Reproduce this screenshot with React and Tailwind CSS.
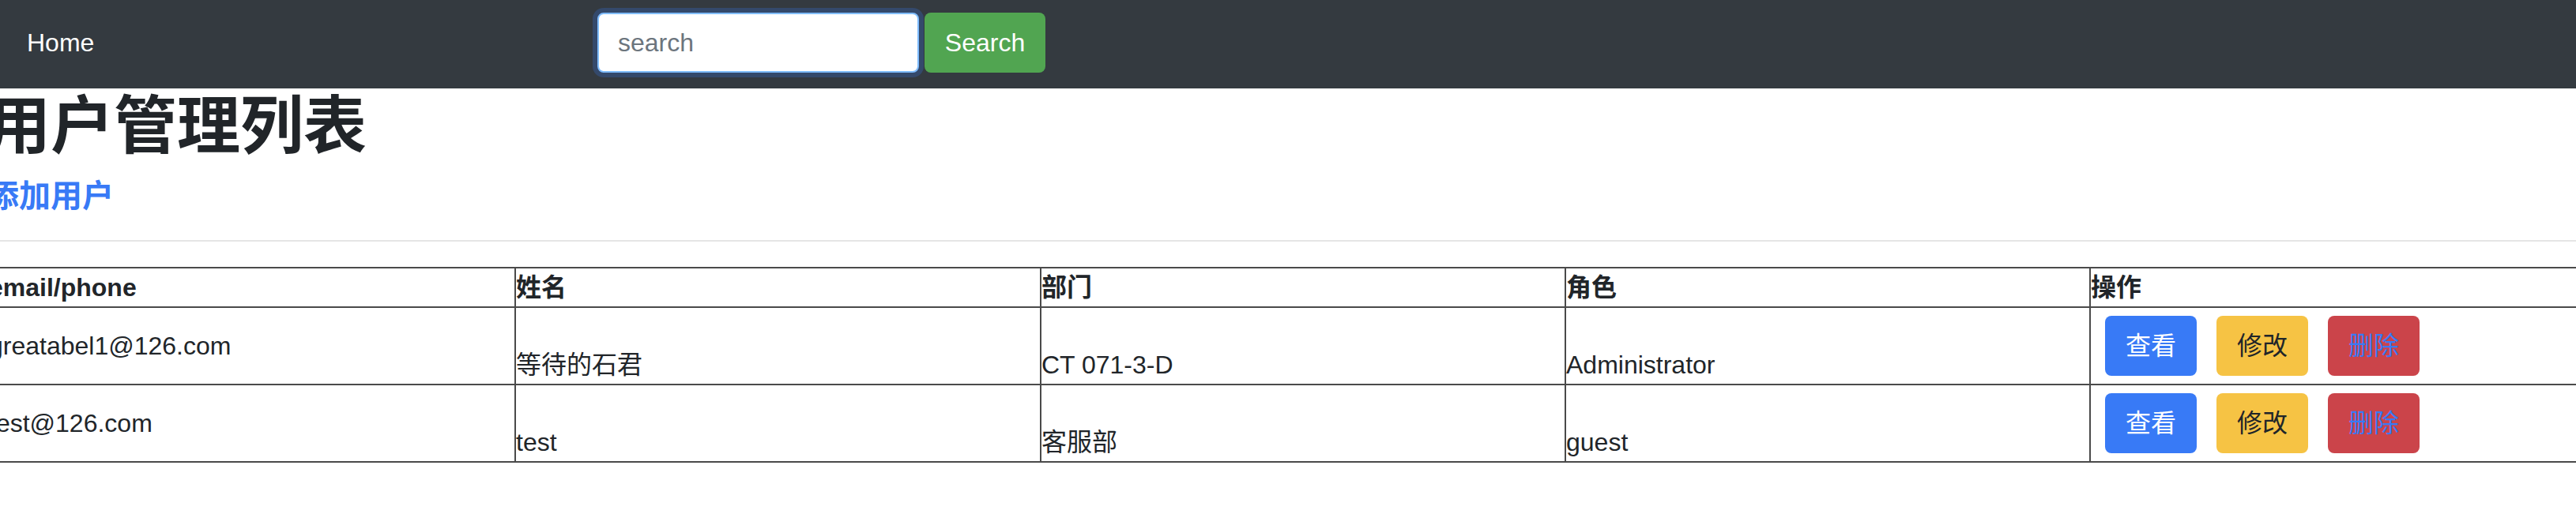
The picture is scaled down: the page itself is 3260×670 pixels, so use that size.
import React from "react";

const font = "font-['Liberation_Sans','Noto_Sans_CJK_SC',sans-serif]";

const users = [
  { email: "greatabel1@126.com", name: "等待的石君", dept: "CT 071-3-D", role: "Administrator" },
  { email: "test@126.com", name: "test", dept: "客服部", role: "guest" },
];

function NavBar() {
  return (
    <nav className="flex h-[112px] items-center bg-[#343a40] pb-[4px]">
      <div className="w-[756px] pl-[34px]">
        <a href="#" className="text-[32px] leading-[48px] text-white">Home</a>
      </div>
      <form className="flex items-center" onSubmit={(e) => e.preventDefault()}>
        <input
          className="h-[76px] w-[407px] rounded-[8px] border-2 border-[#80bdff] bg-white px-[24px] text-[32px] text-[#495057] shadow-[0_0_0_6px_#34496b] outline-none placeholder:text-[#6c757d]"
          placeholder="search"
        />
        <button type="submit" className="ml-[7px] h-[76px] w-[153px] rounded-[8px] bg-[#51a551] text-[32px] text-white">
          Search
        </button>
      </form>
    </nav>
  );
}

function ActionButtons() {
  return (
    <div className="flex items-center gap-[25px] py-[10px] pl-[18px]">
      <button className="h-[76px] w-[116px] rounded-[8px] bg-[#387af6] text-[32px] text-white">查看</button>
      <button className="h-[76px] w-[116px] rounded-[8px] bg-[#f6c344] text-[32px] text-[#212529]">修改</button>
      <button className="h-[76px] w-[116px] rounded-[8px] bg-[#cb444a] text-[32px] text-[#387af6]">删除</button>
    </div>
  );
}

export default function App() {
  const cell = "border-2 border-[#4a4a4a] p-0 text-left";
  return (
    <div className={"w-[3260px] overflow-hidden bg-white text-[#212529] " + font}>
      <NavBar />
      <div className="-ml-[16px]">
        <h1 className="h-[96px] text-[80px] font-semibold leading-[96px]">用户管理列表</h1>
        <a href="#" className="mt-[16px] block text-[40px] font-semibold leading-[48px] text-[#387af6]">添加用户</a>
        <hr className="mt-[32px] border-t-2 border-[#e5e5e5]" />
        <table className="mt-[32px] w-[3327px] table-fixed border-collapse text-[32px] leading-[48px]">
          <colgroup>
            <col className="w-[667px]" />
            <col className="w-[665px]" />
            <col className="w-[664px]" />
            <col className="w-[664px]" />
            <col className="w-[665px]" />
          </colgroup>
          <thead>
            <tr>
              <th className={cell + " font-bold"}>email/phone</th>
              <th className={cell + " font-bold"}>姓名</th>
              <th className={cell + " font-bold"}>部门</th>
              <th className={cell + " font-bold"}>角色</th>
              <th className={cell + " font-bold"}>操作</th>
            </tr>
          </thead>
          <tbody>
            {users.map((u) => (
              <tr key={u.email}>
                <td className={cell + " align-middle"}>{u.email}</td>
                <td className={cell + " align-bottom"}>{u.name}</td>
                <td className={cell + " align-bottom"}>{u.dept}</td>
                <td className={cell + " align-bottom"}>{u.role}</td>
                <td className={cell + " align-middle"}>
                  <ActionButtons />
                </td>
              </tr>
            ))}
          </tbody>
        </table>
      </div>
    </div>
  );
}
